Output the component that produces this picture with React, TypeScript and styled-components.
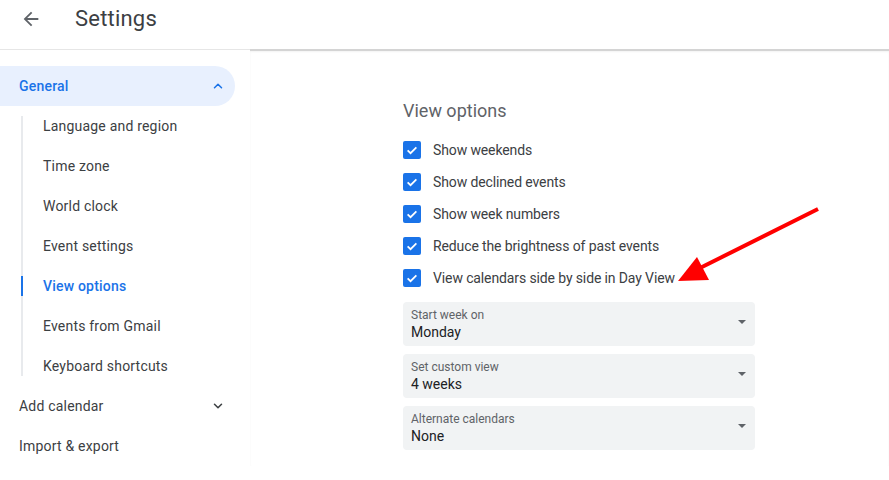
import React from "react";
import styled, { createGlobalStyle } from "styled-components";

const GlobalStyle = createGlobalStyle`
  html, body {
    margin: 0;
    padding: 0;
    background: #fff;
    font-family: Roboto, "Liberation Sans", Arial, sans-serif;
    overflow: hidden;
  }
`;

const Page = styled.div`
  position: relative;
  width: 889px;
  height: 480px;
  overflow: hidden;
`;

const Header = styled.header`
  height: 49px;
  display: flex;
  align-items: center;
  border-bottom: 1px solid #e6e6e6;
`;

const BackButton = styled.div`
  width: 24px;
  height: 24px;
  margin-left: 19px;
  margin-top: -12px;
  display: flex;
  align-items: center;
  justify-content: center;
  color: #5f6368;
`;

const Title = styled.h1`
  margin: -12px 0 0 32px;
  font-size: 22px;
  font-weight: 400;
  color: #3c4043;
  letter-spacing: 0.2px;
`;

const Body = styled.div`
  display: grid;
  grid-template-columns: 250px 1fr;
`;

const Sidebar = styled.nav`
  padding-top: 16px;
`;

const Content = styled.main`
  margin-top: -1px;
  border-top: 2px solid #d4d4d4;
  box-shadow: inset 0 1px 2px rgba(0, 0, 0, 0.05);
  padding: 48px 0 0 153px;
`;

const GroupRow = styled.div<{ $active?: boolean }>`
  width: 235px;
  height: 40px;
  box-sizing: border-box;
  padding: 0 10px 0 19px;
  display: flex;
  align-items: center;
  justify-content: space-between;
  border-radius: 0 20px 20px 0;
  background: ${(p) => (p.$active ? "#e8f0fe" : "transparent")};
  color: ${(p) => (p.$active ? "#1a73e8" : "#3c4043")};
  font-size: 14px;
  font-weight: ${(p) => (p.$active ? 500 : 400)};
  letter-spacing: 0.2px;
`;

const SubList = styled.div`
  position: relative;
  margin-left: 21px;

  &::before {
    content: "";
    position: absolute;
    left: 0;
    top: 10px;
    bottom: 10px;
    width: 2px;
    background: #e8eaed;
  }
`;

const SubItem = styled.div<{ $active?: boolean }>`
  position: relative;
  height: 40px;
  display: flex;
  align-items: center;
  padding-left: 22px;
  font-size: 14px;
  letter-spacing: 0.2px;
  color: ${(p) => (p.$active ? "#1a73e8" : "#3c4043")};
  font-weight: ${(p) => (p.$active ? 500 : 400)};

  &::before {
    content: "";
    display: ${(p) => (p.$active ? "block" : "none")};
    position: absolute;
    left: 0;
    top: 10px;
    width: 2px;
    height: 20px;
    background: #1a73e8;
  }
`;

const SectionTitle = styled.h2`
  margin: 0 0 11px;
  font-size: 18px;
  font-weight: 400;
  color: #5f6368;
  line-height: 24px;
`;

const CheckRow = styled.label`
  height: 32px;
  display: flex;
  align-items: center;
  gap: 12px;
  font-size: 14px;
  color: #3c4043;
  letter-spacing: -0.12px;
`;

const Box = styled.span`
  width: 18px;
  height: 18px;
  border-radius: 2px;
  background: #1a73e8;
  display: flex;
  align-items: center;
  justify-content: center;
`;

const Selects = styled.div`
  margin-top: 8px;
  display: flex;
  flex-direction: column;
  gap: 8px;
  width: 352px;
`;

const Select = styled.div`
  height: 44px;
  box-sizing: border-box;
  border-radius: 4px;
  background: #f1f3f4;
  padding: 6px 8px 0;
  display: flex;
  align-items: center;
  justify-content: space-between;
`;

const SelectText = styled.div`
  display: flex;
  flex-direction: column;
  margin-top: -6px;
`;

const SelectLabel = styled.span`
  font-size: 12px;
  color: #5f6368;
  line-height: 15px;
`;

const SelectValue = styled.span`
  font-size: 14px;
  color: #202124;
  line-height: 18px;
`;

const Caret = styled.span`
  width: 0;
  height: 0;
  margin-right: 1px;
  margin-top: -10px;
  border-left: 4px solid transparent;
  border-right: 4px solid transparent;
  border-top: 4px solid #5f6368;
`;

const Overlay = styled.svg`
  position: absolute;
  left: 0;
  top: 0;
  pointer-events: none;
`;

const Chevron = ({ up }: { up?: boolean }) => (
  <svg width="14" height="14" viewBox="0 0 24 24" fill="none">
    <path
      d={up ? "M6 15l6-6 6 6" : "M6 9l6 6 6-6"}
      stroke="currentColor"
      strokeWidth="2.6"
      strokeLinecap="round"
      strokeLinejoin="round"
    />
  </svg>
);

const Check = () => (
  <svg width="14" height="14" viewBox="0 0 24 24" fill="none">
    <path d="M4.5 12.5l5 5 10-10" stroke="#fff" strokeWidth="3" />
  </svg>
);

const subItems = [
  "Language and region",
  "Time zone",
  "World clock",
  "Event settings",
  "View options",
  "Events from Gmail",
  "Keyboard shortcuts",
];

const options = [
  "Show weekends",
  "Show declined events",
  "Show week numbers",
  "Reduce the brightness of past events",
  "View calendars side by side in Day View",
];

const selects = [
  { label: "Start week on", value: "Monday" },
  { label: "Set custom view", value: "4 weeks" },
  { label: "Alternate calendars", value: "None" },
];

function App() {
  return (
    <Page>
      <GlobalStyle />
      <Header>
        <BackButton>
          <svg width="22" height="22" viewBox="0 0 24 24">
            <path
              d="M20 11H7.83l5.59-5.59L12 4l-8 8 8 8 1.41-1.41L7.83 13H20v-2z"
              fill="#5f6368"
            />
          </svg>
        </BackButton>
        <Title>Settings</Title>
      </Header>
      <Body>
        <Sidebar>
          <GroupRow $active>
            General
            <Chevron up />
          </GroupRow>
          <SubList>
            {subItems.map((s) => (
              <SubItem key={s} $active={s === "View options"}>
                {s}
              </SubItem>
            ))}
          </SubList>
          <GroupRow>
            Add calendar
            <Chevron />
          </GroupRow>
          <GroupRow>Import &amp; export</GroupRow>
        </Sidebar>
        <Content>
          <SectionTitle>View options</SectionTitle>
          {options.map((o) => (
            <CheckRow key={o}>
              <Box>
                <Check />
              </Box>
              {o}
            </CheckRow>
          ))}
          <Selects>
            {selects.map((s) => (
              <Select key={s.label}>
                <SelectText>
                  <SelectLabel>{s.label}</SelectLabel>
                  <SelectValue>{s.value}</SelectValue>
                </SelectText>
                <Caret />
              </Select>
            ))}
          </Selects>
        </Content>
      </Body>
      <Overlay width="889" height="480">
        <line x1="818" y1="209" x2="700" y2="268" stroke="#ff0000" strokeWidth="4" />
        <polygon points="678,281 697,257 709,280" fill="#ff0000" />
      </Overlay>
    </Page>
  );
}

export default App;
